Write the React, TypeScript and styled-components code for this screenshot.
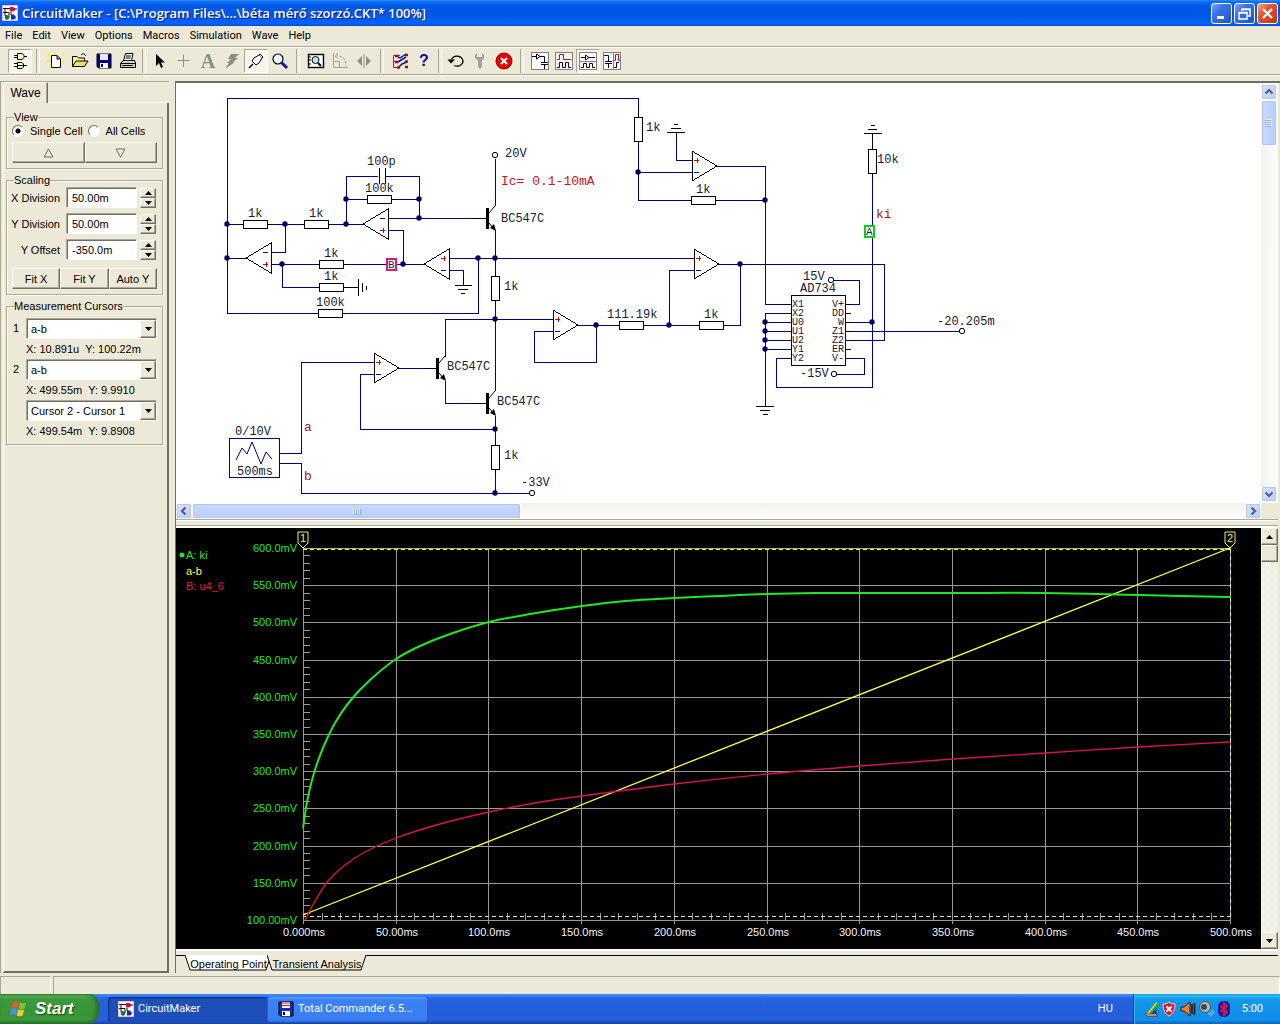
import React, { useState } from "react";
import styled, { createGlobalStyle, css } from "styled-components";

const face = "#ece9d8";
const shade = "#aca899";
const dark = "#716f64";
const navy = "#00007f";
const uiFont = `Roboto, "Noto Sans", sans-serif`;
const sansFont = `"Liberation Sans", Arial, sans-serif`;
const monoFont = `"Liberation Mono", "Courier New", monospace`;

const GlobalStyle = createGlobalStyle`
  * { box-sizing: border-box; }
  body { margin: 0; background: ${face}; font: 11px/14px ${sansFont}; color: #000; }
  button, input, select { font: inherit; color: inherit; margin: 0; padding: 0; border-radius: 0; }
  svg { display: block; }
`;

const raised = css`
  background: ${face};
  border: 1px solid;
  border-color: #fff ${dark} ${dark} #fff;
  box-shadow: inset -1px -1px ${shade};
`;

const sunken = css`
  background: #fff;
  border: 1px solid;
  border-color: ${shade} #fff #fff ${shade};
  box-shadow: inset 1px 1px ${dark};
`;

const Screen = styled.div`
  display: flex;
  flex-direction: column;
  min-height: 100vh;
`;

/* ---------- title bar, menu, toolbar ---------- */

const TitleBar = styled.header`
  display: flex;
  align-items: center;
  gap: 4px;
  height: 26px;
  padding: 0 2px;
  background: linear-gradient(#2a8bff 0, #0c6cf5 2px, #0058e6 6px, #0055e5 14px, #0260f8 21px, #0663fb 24px, #0046c8 26px);
`;

const TitleText = styled.h1`
  flex: 1;
  margin: 0;
  font: 600 13px/18px "Open Sans", "Noto Sans", sans-serif;
  color: #fff;
  text-shadow: 1px 1px #0a1883;
  white-space: nowrap;
  overflow: hidden;
`;

const CaptionButtons = styled.div`
  display: flex;
  gap: 2px;
`;

const CaptionButton = styled.button<{ $close?: boolean }>`
  display: grid;
  place-items: center;
  width: 21px;
  height: 21px;
  border: 1px solid #fff;
  border-radius: 3px;
  background: ${(p) =>
    p.$close
      ? "linear-gradient(135deg, #f0a68c, #e2593a 35%, #d2401b 75%, #b83010)"
      : "linear-gradient(135deg, #7ba5f5, #3d72e4 35%, #2a5fd8 75%, #1b4fc4)"};
`;

const MenuBar = styled.nav`
  display: flex;
  align-items: center;
  gap: 10px;
  height: 20px;
  padding: 0 5px;
`;

const MenuItem = styled.button`
  border: 0;
  background: none;
  font: 11px/14px ${uiFont};
`;

const ToolBar = styled.div`
  display: flex;
  align-items: center;
  height: 30px;
  margin-bottom: 5px;
  padding: 0 8px;
  border-top: 1px solid ${shade};
  border-bottom: 1px solid #fff;
  box-shadow: inset 0 1px #fff, inset 0 -1px ${shade};
`;

const ToolButton = styled.button<{ $pressed?: boolean }>`
  display: grid;
  place-items: center;
  width: 24px;
  height: 24px;
  border: 1px solid;
  border-color: ${(p) => (p.$pressed ? `${shade} #fff #fff ${shade}` : "transparent")};
  background: ${(p) => (p.$pressed ? "#f6f4ec" : "none")};
`;

const ToolSeparator = styled.span<{ $narrow?: boolean }>`
  display: flex;
  justify-content: center;
  width: ${(p) => (p.$narrow ? 8 : 12)}px;
  height: 24px;
  &::before {
    content: "";
    width: 2px;
    border-left: 1px solid ${shade};
    border-right: 1px solid #fff;
  }
`;

/* ---------- side panel ---------- */

const Workspace = styled.main`
  display: flex;
  flex: 1;
  padding-bottom: 3px;
`;

const SidePanel = styled.aside`
  display: flex;
  flex-direction: column;
  flex: none;
  width: 169px;
  margin-right: 6px;
  padding-left: 2px;
  border-top: 1px solid ${shade};
  border-left: 1px solid ${shade};
`;

const SideTabs = styled.div`
  display: flex;
  height: 21px;
  border-left: 1px solid #fff;
`;

const SideTab = styled.button`
  width: 44px;
  height: 21px;
  border: 0;
  border-top: 1px solid #fff;
  border-right: 1px solid ${dark};
  background: ${face};
  box-shadow: inset -1px 0 ${shade};
  font: 12px/16px ${sansFont};
`;

const SideTabRest = styled.span`
  flex: 1;
  border-bottom: 1px solid #fff;
`;

const SideBody = styled.div`
  display: flex;
  flex-direction: column;
  flex: 1;
  gap: 4px;
  padding: 7px 4px 0 2px;
  border: 1px solid;
  border-width: 0 2px 2px 1px;
  border-color: #fff ${dark} ${dark} #fff;
`;

const Group = styled.fieldset`
  min-width: 0;
  margin: 0;
  padding: 0 5px 5px;
  border: 1px solid ${shade};
  box-shadow: 1px 1px #fff, inset 1px 1px #fff;
`;

const GroupTitle = styled.legend`
  margin-left: 2px;
  padding: 0;
  height: 14px;
  background: ${face};
`;

const RadioRow = styled.div`
  display: flex;
  gap: 5px;
  height: 18px;
`;

const RadioLabel = styled.label`
  display: flex;
  align-items: center;
  gap: 6px;
  height: 14px;
  white-space: nowrap;
`;

const Radio = styled.input`
  appearance: none;
  width: 12px;
  height: 12px;
  border: 1px solid;
  border-color: ${dark} #fff #fff ${dark};
  border-radius: 50%;
  background: #fff;
  &:checked {
    background: radial-gradient(circle, #000 2px, #fff 3px);
  }
`;

const ButtonRow = styled.div`
  display: flex;
`;

const PushButton = styled.button`
  ${raised}
  display: grid;
  place-items: center;
  flex: 1;
  height: 21px;
`;

const Fields = styled.div`
  display: flex;
  flex-direction: column;
  gap: 5px;
  padding-bottom: 8px;
`;

const FieldRow = styled.div`
  display: flex;
  align-items: center;
  justify-content: flex-end;
  gap: 6px;
  height: 21px;
  padding-right: 1px;
  white-space: nowrap;
`;

const ValueInput = styled.input`
  ${sunken}
  flex: none;
  width: 71px;
  height: 21px;
  padding-left: 5px;
`;

const Spinner = styled.span`
  display: flex;
  flex-direction: column;
  flex: none;
  width: 16px;
  margin-left: -3px;
`;

const SpinButton = styled.button`
  ${raised}
  display: grid;
  place-items: center;
  height: 10px;
`;

const CursorRows = styled.div`
  display: grid;
  grid-template-columns: 14px 1fr;
  row-gap: 2px;
  padding-top: 5px;
`;

const SelectBox = styled.span`
  ${sunken}
  position: relative;
  display: block;
  height: 21px;
`;

const Select = styled.select`
  appearance: none;
  width: 100%;
  height: 19px;
  padding: 0 18px 0 4px;
  border: 0;
  background: transparent;
`;

const SelectArrow = styled.span`
  ${raised}
  position: absolute;
  top: 1px;
  right: 0;
  display: grid;
  place-items: center;
  width: 16px;
  height: 18px;
  pointer-events: none;
`;

const Reading = styled.p`
  grid-column: 2;
  display: flex;
  gap: 6px;
  margin: 0;
  height: 16px;
  line-height: 16px;
  white-space: nowrap;
`;

const CursorNumber = styled.label`
  padding-top: 3px;
  padding-left: 1px;
`;

/* ---------- document area ---------- */

const Documents = styled.section`
  display: flex;
  flex-direction: column;
  flex: 1;
  min-width: 0;
  padding-right: 2px;
  border-top: 2px solid ${dark};
  border-left: 1px solid ${dark};
`;

const PaneRow = styled.div<{ $grow?: boolean }>`
  display: flex;
  flex: ${(p) => (p.$grow ? "1" : "none")};
`;

const Canvas = styled.div<{ $color: string }>`
  flex: 1;
  min-width: 0;
  overflow: hidden;
  background: ${(p) => p.$color};
`;

const ScrollTrack = styled.div<{ $row?: boolean }>`
  display: flex;
  flex: ${(p) => (p.$row ? "1" : "none")};
  flex-direction: ${(p) => (p.$row ? "row" : "column")};
  width: ${(p) => (p.$row ? "auto" : "17px")};
  height: ${(p) => (p.$row ? "16px" : "auto")};
  padding: ${(p) => (p.$row ? "0" : "1px 1px 1px 0")};
  background: linear-gradient(${(p) => (p.$row ? "180deg" : "90deg")}, #f3f1ec, #fefefb);
`;

const ScrollButton = styled.button`
  display: grid;
  place-items: center;
  flex: none;
  width: 16px;
  height: 16px;
  border: 1px solid #fff;
  border-radius: 2px;
  background: linear-gradient(135deg, #dbe6fe, #b9ccf8);
  box-shadow: inset 0 0 0 1px #b4c8f6;
`;

const ScrollThumb = styled.div<{ $row?: boolean; $size: number }>`
  display: grid;
  place-items: center;
  width: ${(p) => (p.$row ? `${p.$size}px` : "16px")};
  height: ${(p) => (p.$row ? "16px" : `${p.$size}px`)};
  border: 1px solid #fff;
  border-radius: 2px;
  background: linear-gradient(${(p) => (p.$row ? "180deg" : "90deg")}, #c9d8fc, #bbcffb);
  box-shadow: inset 0 0 0 1px #b2c6f4;
`;

const Push = styled.span`
  flex: 1;
`;

const ScrollCorner = styled.span`
  width: 17px;
`;

const Splitter = styled.div`
  height: 9px;
  background: linear-gradient(${shade} 1px, #fff 1px, #fff 2px, ${face} 2px, ${face} 6px, ${shade} 6px, ${shade} 7px, #fff 7px);
`;

const ClassicTrack = styled.div`
  display: flex;
  flex-direction: column;
  width: 17px;
  background: repeating-conic-gradient(#fff 0 25%, ${face} 0 50%) 0 0 / 2px 2px;
`;

const ClassicButton = styled.button`
  ${raised}
  display: grid;
  place-items: center;
  height: 17px;
`;

const SheetTabs = styled.div`
  display: flex;
  height: 24px;
  padding: 6px 0 0 9px;
  background: linear-gradient(#fff 2px, transparent 2px, transparent 6px, #000 6px, #000 7px, transparent 7px);
`;

const SheetTab = styled.button<{ $width: number }>`
  position: relative;
  width: ${(p) => p.$width}px;
  height: 17px;
  margin-right: -5px;
  border: 0;
  background: none;
  white-space: nowrap;
`;

const SheetShape = styled.svg`
  position: absolute;
  inset: 0;
`;

const SheetLabel = styled.span`
  position: relative;
`;

const StatusBar = styled.footer`
  display: grid;
  grid-template-columns: 51px 1fr;
  gap: 2px;
  height: 18px;
`;

const StatusCell = styled.span`
  border-top: 1px solid ${shade};
  border-left: 1px solid ${shade};
  border-right: 1px solid #fff;
`;

/* ---------- task bar ---------- */

const TaskBar = styled.footer`
  display: flex;
  align-items: center;
  height: 30px;
  font: 11px/14px ${uiFont};
  color: #fff;
  background: linear-gradient(#3e80ee 0, #3f8cf3 1px, #2663e0 4px, #245ddb 20px, #2460dd 26px, #1941a5 30px);
`;

const StartButton = styled.button`
  display: flex;
  align-items: center;
  gap: 6px;
  width: 99px;
  height: 30px;
  margin-right: 9px;
  padding-left: 9px;
  border: 0;
  border-radius: 0 10px 12px 0;
  font: italic 700 17px/22px ${sansFont};
  text-shadow: 1px 1px 1px #17430f;
  background: linear-gradient(#3c873c 0, #5bb35b 2px, #3d993c 5px, #389438 22px, #3a9a3a 26px, #277027 30px);
  box-shadow: inset -3px 0 4px #2a6b2a;
`;

const TaskButton = styled.button<{ $active?: boolean }>`
  display: flex;
  align-items: center;
  gap: 4px;
  width: 159px;
  height: 25px;
  margin: 0 1px 0 0;
  padding-left: 10px;
  border: 0;
  border-radius: 3px;
  white-space: nowrap;
  background: ${(p) =>
    p.$active ? "#1d4fb6" : "linear-gradient(#5a9bff 0, #3c81f3 3px, #3a7ff2 22px, #2f6fdd 25px)"};
  box-shadow: ${(p) => (p.$active ? "inset 1px 1px 2px #0d2f80" : "none")};
`;

const Language = styled.span`
  margin-left: auto;
  padding-right: 20px;
`;

const Tray = styled.div`
  display: flex;
  align-items: center;
  gap: 10px;
  height: 30px;
  padding: 0 17px 0 10px;
  border-left: 1px solid #0b3a9a;
  background: linear-gradient(#1898e6 0, #2cb8f8 2px, #139ae8 5px, #0f8fe8 22px, #1290ea 26px, #0a63b8 30px);
  box-shadow: inset 1px 0 #2cc0f8;
`;

const Clock = styled.time``;

/* ---------- small drawings ---------- */

const Triangle = ({ up, open }: { up?: boolean; open?: boolean }) =>
  open ? (
    <svg width="11" height="10" viewBox="0 0 11 10" fill="none" stroke="#716f64">
      <path d={up ? "M1 9H10L5.500 1Z" : "M1 1H10L5.500 9Z"} />
    </svg>
  ) : (
    <svg width="7" height="4" viewBox="0 0 7 4">
      <path d={up ? "M0 4H7L3.500 0Z" : "M0 0H7L3.500 4Z"} />
    </svg>
  );

const Chevron = ({ turn }: { turn: number }) => (
  <svg width="10" height="10" viewBox="0 0 10 10" fill="none" stroke="#4d6185" strokeWidth="2.200">
    <path d="M1.500 6.500 5 3l3.500 3.500" transform={`rotate(${turn} 5 5)`} />
  </svg>
);

const Grip = ({ row }: { row?: boolean }) => (
  <svg width="8" height="8" viewBox="0 0 8 8">
    <g transform={row ? undefined : "rotate(90 4 4)"} shapeRendering="crispEdges">
      <path d="M0 1V7M2 1V7M4 1V7M6 1V7" stroke="#eef4fe" />
      <path d="M1 2V8M3 2V8M5 2V8M7 2V8" stroke="#8cb0f8" />
    </g>
  </svg>
);

const AppIcon = ({ size = 16 }: { size?: number }) => (
  <svg width={size} height={size} viewBox="0 0 16 16">
    <rect width="16" height="16" fill="#fff" stroke="#f4a0c8" strokeWidth="1.500" />
    <path d="M1 3.500H8M3 3V11M1 7.500H7V12M3 11H6" stroke="#111" fill="none" />
    <path d="M8 2h2.500a2.500 2.300 0 0 1 0 4.600H8Z" fill="#d81030" />
    <path d="M12 4h3M9 7v3h3" stroke="#111" fill="none" />
    <circle cx="5" cy="12.500" r="2.200" fill="#0a7a3a" />
    <path d="M9 10h2.500a2.200 2.200 0 0 1 0 4.500H9Z" fill="#1430a8" />
  </svg>
);

const Floppy = ({ size = 16, red }: { size?: number; red?: boolean }) => (
  <svg width={size} height={size} viewBox="0 0 16 16">
    <path d="M1 1H15V15H2.500L1 13.500Z" fill={red ? "#1a2fae" : "#000080"} stroke="#000" />
    <rect x="4" y="1" width="8" height="6" fill={red ? "#f4f4f4" : "#e8e8f4"} />
    {red && <path d="M4 2H12M4 4.500H12" stroke="#d02020" />}
    <rect x="4" y="10" width="8" height="5" fill="#fff" />
    <rect x="5" y="11" width="2" height="3" fill="#000060" />
  </svg>
);

const icons: Record<string, React.ReactNode> = {
  parts: (
    <g stroke="#000" fill="#ffffb0">
      <path d="M6.500 1.500H10c4 0 4 6 0 6H6.500Z" />
      <path d="M3 3.500H6M3 5.500H6M13 4.500h3M3 11.500H6M3 14.500H6M13 13.500h3" fill="none" />
      <path d="M6.500 10.500H11l1.500 1.500V15l-1.500 1.500H6.500Z" />
      <path d="M7 13.500H12" />
    </g>
  ),
  new: (
    <g>
      <path d="M1 2 4 5M0 9h3M15 3l2-1M15 10h2M2 16l2-1M8 0v2" stroke="#fff200" strokeWidth="2" />
      <path d="M4.500 3.500H10L13.500 7V15.500H4.500ZM10 3.500V7H13.500" fill="#fff" stroke="#000" />
    </g>
  ),
  open: (
    <g stroke="#000" fill="#ffff90">
      <path d="M1.500 14.500V4.500H6L7.500 6H13.500V9" />
      <path d="M1.500 14.500 5 9H17L13.500 14.500Z" fill="#e8e070" />
      <path d="M10 3c2-2 4-1 5 1" fill="none" />
    </g>
  ),
  print: (
    <g stroke="#000" fill="#fff">
      <path d="M4.500 9 6.500 1.500H14L12.500 9Z" />
      <path d="M7 4H12M6.500 6H11.500" />
      <path d="M1.500 11.500 4 8.500H15.500L16.500 11V15.500H1.500Z" fill="#d8d4c0" />
      <path d="M1.500 11.500H16M3 13.500H14" />
    </g>
  ),
  arrow: <path d="M5 2V14L8 11 10 16 12 15 10 10.500H14Z" />,
  plus: <path d="M8.500 3V15M2.500 8.500H14.500" stroke="#8f8d84" />,
  bolt: <path d="M8 2H16L12 6H15L10 10H12L2 17 6 11H4L8 7H5Z" fill="#8f8d84" />,
  probe: (
    <g stroke="#000" fill="#fff">
      <path d="M2 16 6 12" strokeWidth="1.500" />
      <path d="M5 9 9 13 12 11 15 6 12 3 7 6Z" />
      <path d="M12 3 13 2 16 5 15 6" />
    </g>
  ),
  zoom: (
    <g fill="none">
      <circle cx="7" cy="7" r="5" fill="#f0ffff" stroke="#000" strokeWidth="1.200" />
      <path d="M10.500 10.500 16 16" stroke="#1a1a90" strokeWidth="3" />
    </g>
  ),
  fit: (
    <g fill="none" stroke="#000">
      <rect x="1.500" y="2.500" width="15" height="13" fill="#fff" strokeWidth="1.400" />
      <circle cx="8.500" cy="8" r="3.500" fill="#bfe6ea" />
      <path d="M11 11 14 14" strokeWidth="2" />
      <path d="M2 5H4M2 8H4M2 12H4" />
    </g>
  ),
  rotate: (
    <g fill="none" stroke="#a5a398">
      <path d="M2.500 1V15.500H17M2.500 9.500H8.500V15" />
      <path d="M7 1 4 4 7 7M4 4h3c5 0 8 4 8 10" strokeDasharray="3 1" />
    </g>
  ),
  mirror: (
    <g>
      <path d="M9 2V16" stroke="#8f8d84" />
      <path d="M7 4V14L2 9ZM11 4V14L16 9Z" fill="#8f8d84" />
    </g>
  ),
  nodes: (
    <g fill="none">
      <path d="M2.500 3.500H9M2.500 3.500V15.500H7M2.500 9.500H7" stroke="#d01020" />
      <path d="M7 5 9 6 15 2M7 10 15 5M8 15 11 12 16 10" stroke="#0a18a0" strokeWidth="1.500" />
      <path d="M4 4h3M4 10h3M6 15.500h3M14 3h3M14 9.500h3M14 15h3" stroke="#a01010" strokeWidth="2.500" />
    </g>
  ),
  undo: (
    <g>
      <path d="M4 9a6 5 0 1 1 3 4.500" fill="none" stroke="#000" strokeWidth="1.300" />
      <path d="M0.500 7.500H8L4 11.500Z" />
    </g>
  ),
  wrench: (
    <path d="M6 1V5H11V1C14 3 14 7 11 8V15L9 17 7 15V8C3 7 3 3 6 1Z" fill="#a5a398" />
  ),
  stop: (
    <g>
      <circle cx="9" cy="9" r="8" fill="#e00808" stroke="#900" />
      <path d="M6 6 12 12M12 6 6 12" stroke="#fff" strokeWidth="2" />
    </g>
  ),
  schematic: (
    <g fill="none" stroke="#000050">
      <rect x="0.500" y="0.500" width="17" height="17" fill="#fff" stroke="#808080" />
      <path d="M1 4.500H5M9 4.500H13.500V10M5.500 2V7L9 4.500ZM10 10.500H17M10 12.500H17M13.500 13V17" />
    </g>
  ),
  waves: (
    <g fill="none">
      <rect x="0.500" y="0.500" width="17" height="17" fill="#f6f4ec" stroke="#808080" />
      <path d="M2 7.500H4.500V2.500H8.500V7.500H16" stroke="#c01010" />
      <path d="M2 15.500H4.500V10.500H7.500V15.500H10.500V10.500H13.500V15.500H16" stroke="#000050" />
    </g>
  ),
  stacked: (
    <g fill="none" stroke="#000050">
      <rect x="0.500" y="0.500" width="17" height="17" fill="#fff" stroke="#808080" />
      <path d="M2 5.500H6M10 5.500H16M6.500 3V8L10 5.500Z" />
      <path d="M1 9.500H17" stroke="#808080" />
      <path d="M2 15.500H4.500V11.500H7.500V15.500H10.500V11.500H13.500V15.500H16" />
    </g>
  ),
  split: (
    <g fill="none" stroke="#000050">
      <rect x="0.500" y="0.500" width="17" height="17" fill="#fff" stroke="#808080" />
      <path d="M1 3.500H5.500V9M2 9.500H9M2 11.500H9M5.500 12V16" />
      <path d="M10.500 1V17" stroke="#808080" />
      <path d="M11 8.500H12.500V2.500H15.500V8.500H17" stroke="#c01010" />
      <path d="M11 15.500H13.500V10.500H16" />
    </g>
  ),
};

const Glyph = styled.span<{ $serif?: boolean }>`
  font: ${(p) => (p.$serif ? `700 20px/22px "Liberation Serif", serif` : `700 16px/20px ${sansFont}`)};
  color: ${(p) => (p.$serif ? "#8f8d84" : "#0a0a9c")};
`;

const Icon = ({ name }: { name: string }) => {
  if (name === "text") return <Glyph $serif>A</Glyph>;
  if (name === "help") return <Glyph>?</Glyph>;
  if (name === "save") return <Floppy />;
  return (
    <svg width="18" height="18" viewBox="0 0 18 18">
      {icons[name]}
    </svg>
  );
};

/* ---------- schematic ---------- */

const Label = styled.text<{ $size?: number; $color?: string }>`
  font: ${(p) => p.$size ?? 12}px ${monoFont};
  fill: ${(p) => p.$color ?? "#202030"};
`;

const resistors: [number, number, boolean][] = [
  [255, 224, false], [316, 224, false], [379, 199, false], [331, 264, false], [331, 287, false],
  [330, 313, false], [631, 325, false], [711, 325, false], [703, 200, false],
  [495, 288, true], [495, 457, true], [638, 129, true], [872, 161, true],
];

const nodes: [number, number][] = [
  [227, 224], [227, 258], [285, 224], [346, 224], [346, 199], [419, 199], [419, 218], [403, 264],
  [282, 264], [478, 258], [495, 258], [495, 319], [596, 325], [669, 325], [740, 264], [638, 172],
  [765, 200], [765, 322], [765, 331], [765, 340], [765, 349], [872, 322], [495, 429], [495, 493],
];

// x, y of the base centre, direction of the tip, and whether "+" is the upper input
const opamps: [number, number, 1 | -1, boolean][] = [
  [271, 258, -1, false], [388, 224, -1, false], [449, 264, -1, true],
  [692, 166, 1, true], [694, 264, 1, true], [553, 325, 1, true], [374, 368, 1, true],
];

const transistors: [number, number][] = [[487, 218], [437, 368], [487, 403]];

const terminals: [number, number][] = [[495, 155], [831, 280], [834, 374], [962, 331], [532, 493]];

const wires = [
  "M227 313V98H638V200H765", "M227 224H363M285 224V252H271", "M346 224V176H378M386 176H419V218",
  "M346 199H419M388 218H470", "M388 230H403V264M271 264H424M282 264V287H345", "M227 258H236",
  "M227 313H478V258M449 258H694", "M449 270H463V278M495 159V206M495 230V391",
  "M445 357V319H553M445 381V403H470", "M553 331H534V362H596V325M578 325H740V264M669 325V270H694",
  "M718 264H884V340H846M717 166H765V304H791", "M692 160H676V138M692 172H638",
  "M791 313H765V402M765 322H791M765 331H791M765 340H791M765 349H791", "M791 358H776V387H872V139M846 322H872",
  "M846 304H859V280H834M846 358H864V374H837M846 331H959", "M374 362H301V453H279M374 374H360V429H495",
  "M399 368H430M495 416V493M279 463H301V493H529",
];

const blackLines = [
  "M379 168V184M385 168V184", "M345 287H358M358 279V296M362 283V292M366 286V290",
  "M463 278V285M455 285H472M458 289H468M461 293H465", "M676 138V132M667 132H685M671 128H681M674 124H678",
  "M872 139V133M864 133H882M868 129H877M871 125H875", "M765 400V406M756 406H774M760 410H770M763 414H768",
  "M470 218H486M470 403H486M425 368H436", "M785 304H791M785 313H791M785 358H791M236 258H246",
  "M846 304H851M846 313H851M846 322H851M846 331H851M846 340H851M846 349H851M846 358H851",
];

const labels: [string, number, number][] = [
  ["100p", 367, 165], ["100k", 365, 192], ["1k", 248, 217], ["1k", 309, 217], ["1k", 324, 257],
  ["1k", 324, 280], ["100k", 316, 306], ["20V", 505, 157], ["BC547C", 501, 222], ["1k", 504, 290],
  ["BC547C", 447, 370], ["BC547C", 497, 405], ["1k", 504, 459], ["-33V", 521, 486], ["0/10V", 235, 435],
  ["500ms", 237, 475], ["1k", 646, 131], ["1k", 696, 193], ["10k", 877, 163], ["111.19k", 607, 318],
  ["1k", 704, 318], ["15V", 803, 280], ["AD734", 800, 292], ["-15V", 800, 377], ["-20.205m", 937, 325],
];

const leftPins = ["X1", "X2", "U0", "U1", "U2", "Y1", "Y2"];
const rightPins = ["V+", "DD", "W", "Z1", "Z2", "ER", "V-"];

const Schematic = () => (
  <svg width="1085" height="420" viewBox="176 83 1085 420" role="img" aria-label="Circuit schematic">
    <g fill="none" shapeRendering="crispEdges">
      <path d={wires.join("")} stroke={navy} />
      <path d={blackLines.join("")} stroke="#000" />
      <path d="M381 176H384" stroke="#fff" />
      <rect x="791" y="295" width="54" height="70" fill="#fff" stroke="#000" />
      <rect x="229" y="438" width="50" height="39" fill="#fff" stroke={navy} />
      {resistors.map(([x, y, upright]) =>
        upright ? (
          <g key={`${x}-${y}`}>
            <path d={`M${x} ${y - 16}V${y + 16}`} stroke="#000" />
            <rect x={x - 4} y={y - 12} width="8" height="24" fill="#fff" stroke="#000" />
          </g>
        ) : (
          <g key={`${x}-${y}`}>
            <path d={`M${x - 16} ${y}H${x + 16}`} stroke="#000" />
            <rect x={x - 12} y={y - 4} width="24" height="8" fill="#fff" stroke="#000" />
          </g>
        ),
      )}
    </g>
    {opamps.map(([x, y, dir, plusUp]) => {
      const s = x + dir * 5;
      const plus = plusUp ? y - 6 : y + 6;
      const minus = plusUp ? y + 6 : y - 6;
      return (
        <g key={`${x}-${y}`} fill="none" shapeRendering="crispEdges">
          <path d={`M${x} ${y - 15}V${y + 15}L${x + dir * 25} ${y}Z`} fill="#fff" stroke="#000" />
          <path d={`M${s - 3} ${plus}H${s + 2}M${s} ${plus - 2}V${plus + 3}`} stroke="#d00000" />
          <path d={`M${s - 3} ${minus}H${s + 2}`} stroke="#0000c0" />
        </g>
      );
    })}
    {transistors.map(([x, y]) => (
      <g key={`${x}-${y}`}>
        <rect x={x - 1} y={y - 10} width="3" height="21" />
        <path d={`M${x + 2} ${y - 5}L${x + 8} ${y - 12}M${x + 2} ${y + 5}L${x + 8} ${y + 12}`} stroke="#000" />
        <path d={`M${x + 9} ${y + 13}L${x + 3} ${y + 10}L${x + 7} ${y + 6}Z`} />
      </g>
    ))}
    {nodes.map(([x, y]) => (
      <circle key={`${x}-${y}`} cx={x} cy={y} r="2.700" fill="#000060" />
    ))}
    {terminals.map(([x, y]) => (
      <circle key={`${x}-${y}`} cx={x} cy={y} r="2.700" fill="#fff" stroke="#000" />
    ))}
    <path d="M236 460 242 448 247 454 252 442 261 464 266 452 272 459" fill="none" stroke={navy} />
    <rect x="387" y="259" width="9" height="11" fill="#fff" stroke="#d8187c" strokeWidth="2" />
    <Label x="388" y="268" $size={11}>B</Label>
    <rect x="865" y="226" width="9" height="11" fill="#fff" stroke="#00d020" strokeWidth="2" />
    <Label x="866" y="235" $size={11}>A</Label>
    {labels.map(([t, x, y]) => (
      <Label key={`${x}-${y}`} x={x} y={y}>{t}</Label>
    ))}
    {leftPins.map((t, i) => (
      <Label key={t} x="792" y={307 + i * 9} $size={10}>{t}</Label>
    ))}
    {rightPins.map((t, i) => (
      <Label key={t} x="844" y={307 + i * 9} $size={10} textAnchor="end">{t}</Label>
    ))}
    <Label x="501" y="185" $size={13} $color="#d01020">Ic= 0.1-10mA</Label>
    <Label x="876" y="218" $size={13} $color="#a02020">ki</Label>
    <Label x="304" y="431" $size={13} $color="#a02020">a</Label>
    <Label x="304" y="480" $size={13} $color="#a02020">b</Label>
  </svg>
);

/* ---------- oscillogram ---------- */

const PlotText = styled.text<{ $color: string }>`
  font: 11px ${sansFont};
  fill: ${(p) => p.$color};
`;

type Point = [number, number];

const smooth = (pts: Point[]) => {
  let d = `M${pts[0][0]} ${pts[0][1]}`;
  for (let i = 0; i < pts.length - 1; i++) {
    const a = pts[Math.max(i - 1, 0)];
    const b = pts[i];
    const c = pts[i + 1];
    const e = pts[Math.min(i + 2, pts.length - 1)];
    const w = (c[0] - b[0]) / 3;
    const m1 = (c[1] - a[1]) / (c[0] - a[0]);
    const m2 = (e[1] - b[1]) / (e[0] - b[0]);
    d += `C${b[0] + w} ${b[1] + m1 * w} ${c[0] - w} ${c[1] - m2 * w} ${c[0]} ${c[1]}`;
  }
  return d;
};

const greenCurve: Point[] = [
  [303, 828], [307, 802], [314, 773], [323, 748], [335, 723], [350, 701], [370, 680], [396, 659],
  [420, 646], [450, 634], [489, 622], [530, 614], [582, 606], [625, 601], [674, 598], [720, 596],
  [767, 594], [815, 593], [860, 593], [953, 593], [1045, 593], [1138, 595], [1230, 597],
];
const redCurve: Point[] = [
  [305, 920], [310, 910], [318, 896], [328, 881], [345, 865], [365, 852], [396, 838], [440, 824],
  [489, 812], [535, 803], [582, 796], [674, 784], [767, 774], [860, 766], [953, 759], [1045, 753],
  [1138, 747], [1230, 742],
];

const yLabels = ["600.0mV", "550.0mV", "500.0mV", "450.0mV", "400.0mV", "350.0mV", "300.0mV", "250.0mV", "200.0mV", "150.0mV", "100.00mV"];
const xLabels = ["0.000ms", "50.00ms", "100.0ms", "150.0ms", "200.0ms", "250.0ms", "300.0ms", "350.0ms", "400.0ms", "450.0ms", "500.0ms"];
const gridX = (i: number) => Math.round(303 + i * 92.7);
const gridY = (i: number) => Math.round(548 + i * 37.2);
const range = (n: number) => Array.from({ length: n }, (_, i) => i);

const Oscillogram = () => (
  <svg width="100%" height="100%" viewBox="176 528 1085 421" role="img" aria-label="Transient analysis waveforms">
    <g stroke="#9a9a9a" shapeRendering="crispEdges">
      {range(11).map((i) => (
        <path key={i} d={`M${gridX(i)} 548V924M303 ${gridY(i)}H1230`} />
      ))}
      {range(51).map((i) => (
        <path key={i} d={`M303 ${Math.round(548 + i * 7.44)}h7M${Math.round(303 + i * 18.54)} 913v7`} />
      ))}
    </g>
    <g stroke="#f0f060" fill="none" shapeRendering="crispEdges">
      <path d="M303 548H1230" stroke="#b8b850" />
      <path d="M303 549H1230M303 916H1230M1230 549V920" strokeDasharray="4 3" />
    </g>
    <path d="M303 915 1230 548" stroke="#ffff50" strokeWidth="1.300" />
    <path d={smooth(redCurve)} fill="none" stroke="#d81450" strokeWidth="1.300" />
    <path d={smooth(greenCurve)} fill="none" stroke="#20e820" strokeWidth="2" />
    {[303, 1230].map((x, i) => (
      <g key={x}>
        <path d={`M${x - 5} 532h10v11l-5 5-5-5Z`} fill="#000" stroke="#f0f060" />
        <PlotText x={x} y="542" $color="#f0f060" textAnchor="middle">{i + 1}</PlotText>
      </g>
    ))}
    {yLabels.map((t, i) => (
      <PlotText key={t} x="297" y={gridY(i) + 4} $color="#20e820" textAnchor="end">{t}</PlotText>
    ))}
    {xLabels.map((t, i) => (
      <PlotText key={t} x={gridX(i) + 1} y="936" $color="#f4f4f4" textAnchor="middle">{t}</PlotText>
    ))}
    <circle cx="182" cy="555" r="2.500" fill="#20e820" />
    <PlotText x="186" y="559" $color="#20e820">A: ki</PlotText>
    <PlotText x="186" y="575" $color="#ffff50">a-b</PlotText>
    <PlotText x="186" y="590" $color="#e8145c">B: u4_6</PlotText>
  </svg>
);

/* ---------- composed parts ---------- */

type Tool = [icon: string, title: string, pressed?: boolean];
const toolGroups: { tools: Tool[]; narrow?: boolean }[] = [
  { tools: [["parts", "Parts browser", true]] },
  { tools: [["new", "New"], ["open", "Open"], ["save", "Save"], ["print", "Print"]], narrow: true },
  { tools: [["arrow", "Arrow"], ["plus", "Wire"], ["text", "Text"], ["bolt", "Delete"], ["probe", "Probe", true], ["zoom", "Zoom"]] },
  { tools: [["fit", "Fit to window"], ["rotate", "Rotate 90"], ["mirror", "Mirror"]] },
  { tools: [["nodes", "Digital mode"], ["help", "Help"]], narrow: true },
  { tools: [["undo", "Reset"], ["wrench", "Setup"], ["stop", "Stop"]] },
  { tools: [["schematic", "Schematic"], ["waves", "Waves"], ["stacked", "Split horizontally", true], ["split", "Split vertically"]] },
];

const Field = ({ id, label, value }: { id: string; label: string; value: string }) => (
  <FieldRow>
    <label htmlFor={id}>{label}</label>
    <ValueInput id={id} defaultValue={value} />
    <Spinner>
      <SpinButton aria-label={`Increase ${label}`}><Triangle up /></SpinButton>
      <SpinButton aria-label={`Decrease ${label}`}><Triangle /></SpinButton>
    </Spinner>
  </FieldRow>
);

const Picker = ({ id, value, label }: { id: string; value: string; label?: string }) => (
  <SelectBox>
    <Select id={id} aria-label={label} defaultValue={value}>
      <option>{value}</option>
    </Select>
    <SelectArrow><Triangle /></SelectArrow>
  </SelectBox>
);

const WavePanel = () => {
  const [view, setView] = useState("single");
  return (
    <SidePanel>
      <SideTabs>
        <SideTab>Wave</SideTab>
        <SideTabRest />
      </SideTabs>
      <SideBody>
        <Group>
          <GroupTitle>View</GroupTitle>
          <RadioRow>
            <RadioLabel>
              <Radio type="radio" name="view" checked={view === "single"} onChange={() => setView("single")} />
              Single Cell
            </RadioLabel>
            <RadioLabel>
              <Radio type="radio" name="view" checked={view === "all"} onChange={() => setView("all")} />
              All Cells
            </RadioLabel>
          </RadioRow>
          <ButtonRow>
            <PushButton aria-label="Previous cell"><Triangle up open /></PushButton>
            <PushButton aria-label="Next cell"><Triangle open /></PushButton>
          </ButtonRow>
        </Group>
        <Group>
          <GroupTitle>Scaling</GroupTitle>
          <Fields>
            <Field id="xdiv" label="X Division" value="50.00m" />
            <Field id="ydiv" label="Y Division" value="50.00m" />
            <Field id="yoff" label="Y Offset" value="-350.0m" />
          </Fields>
          <ButtonRow>
            <PushButton>Fit X</PushButton>
            <PushButton>Fit Y</PushButton>
            <PushButton>Auto Y</PushButton>
          </ButtonRow>
        </Group>
        <Group>
          <GroupTitle>Measurement Cursors</GroupTitle>
          <CursorRows>
            <CursorNumber htmlFor="cursor1">1</CursorNumber>
            <Picker id="cursor1" value="a-b" />
            <Reading><span>X: 10.891u</span><span>Y: 100.22m</span></Reading>
            <CursorNumber htmlFor="cursor2">2</CursorNumber>
            <Picker id="cursor2" value="a-b" />
            <Reading><span>X: 499.55m</span><span>Y: 9.9910</span></Reading>
            <span />
            <Picker id="difference" value="Cursor 2 - Cursor 1" label="Difference" />
            <Reading><span>X: 499.54m</span><span>Y: 9.8908</span></Reading>
          </CursorRows>
        </Group>
      </SideBody>
    </SidePanel>
  );
};

const Sheet = ({ label, width, active }: { label: string; width: number; active?: boolean }) => (
  <SheetTab $width={width}>
    <SheetShape width={width} height="17" viewBox={`0 0 ${width} 17`}>
      <path d={`M0 0 5 15H${width - 6}L${width - 1} 0`} fill={active ? "#fff" : face} stroke="#000" />
    </SheetShape>
    <SheetLabel>{label}</SheetLabel>
  </SheetTab>
);

const TrayIcons = () => (
  <svg width="88" height="18" viewBox="0 0 88 18">
    <path d="M2 14 12 3 13 15Z" fill="#2040c0" />
    <path d="M3 15 13 3" stroke="#ffe020" strokeWidth="2" />
    <path d="M5 15 14 4" stroke="#20b030" strokeWidth="2" />
    <path d="M1 14H12L14 16H3Z" fill="#f8e8d0" stroke="#803010" />
    <path d="M25 2C27 4 29 4 31 4 31 10 29 14 25 16 21 14 19 10 19 4 21 4 23 4 25 2Z" fill="#d81830" stroke="#f4d0d0" />
    <path d="M22.500 6.500 27.500 11.500M27.500 6.500 22.500 11.500" stroke="#fff" strokeWidth="2" />
    <path d="M37 7H40L46 2V16L40 11H37Z" fill="#f08030" stroke="#401808" />
    <path d="M48 4V14M50.500 3V15" stroke="#201010" strokeWidth="1.500" />
    <circle cx="61" cy="7" r="5.500" fill="#b8b8b8" stroke="#505860" />
    <circle cx="60" cy="7" r="3" fill="#404850" />
    <path d="M64 14c2 0 4-2 5-4M66 16c2-1 3-2 4-4" stroke="#c0d8f0" fill="none" />
    <rect x="74" y="1" width="12" height="16" rx="5" fill="#1020b0" />
    <path d="M76.500 6 83 12 80 15V3L83 6 76.500 12" fill="none" stroke="#f01030" strokeWidth="1.800" />
  </svg>
);

const WindowsFlag = () => (
  <svg width="20" height="18" viewBox="0 0 20 18">
    <path d="M4 2c2-1 4-1 6 0L8.500 8c-2-1-4-1-6 0Z" fill="#f0582c" />
    <path d="M11 2.500c2 1 4 1 6 0L15.500 8.500c-2 1-4 1-6 0Z" fill="#7cc242" />
    <path d="M2.200 9c2-1 4-1 6 0L6.800 15c-2-1-4-1-6 0Z" fill="#4a90e8" />
    <path d="M9.200 9.500c2 1 4 1 6 0L13.700 15.500c-2 1-4 1-6 0Z" fill="#fcc82c" />
  </svg>
);

export default function App() {
  return (
    <Screen>
      <GlobalStyle />
      <TitleBar>
        <AppIcon />
        <TitleText>CircuitMaker - [C:\Program Files\...\béta mérő szorzó.CKT* 100%]</TitleText>
        <CaptionButtons>
          <CaptionButton aria-label="Minimize">
            <svg width="13" height="13"><rect x="2" y="9" width="7" height="3" fill="#fff" /></svg>
          </CaptionButton>
          <CaptionButton aria-label="Restore">
            <svg width="13" height="13" fill="none" stroke="#fff">
              <path d="M4 4V2H12V9H10M4 2.500H12" strokeWidth="1.500" />
              <path d="M1 5.500H9V12H1ZM1 6H9" strokeWidth="1.500" />
            </svg>
          </CaptionButton>
          <CaptionButton aria-label="Close" $close>
            <svg width="13" height="13"><path d="M2 2 11 11M11 2 2 11" stroke="#fff" strokeWidth="2.200" /></svg>
          </CaptionButton>
        </CaptionButtons>
      </TitleBar>
      <MenuBar>
        {["File", "Edit", "View", "Options", "Macros", "Simulation", "Wave", "Help"].map((m) => (
          <MenuItem key={m}>{m}</MenuItem>
        ))}
      </MenuBar>
      <ToolBar>
        {toolGroups.map((group, i) => (
          <React.Fragment key={i}>
            {i > 0 && <ToolSeparator $narrow={toolGroups[i - 1].narrow} />}
            {group.tools.map(([icon, title, pressed]) => (
              <ToolButton key={icon} aria-label={title} $pressed={pressed}>
                <Icon name={icon} />
              </ToolButton>
            ))}
          </React.Fragment>
        ))}
      </ToolBar>
      <Workspace>
        <WavePanel />
        <Documents>
          <PaneRow>
            <Canvas $color="#fff"><Schematic /></Canvas>
            <ScrollTrack>
              <ScrollButton aria-label="Scroll up"><Chevron turn={0} /></ScrollButton>
              <ScrollThumb $size={46}><Grip /></ScrollThumb>
              <Push />
              <ScrollButton aria-label="Scroll down"><Chevron turn={180} /></ScrollButton>
            </ScrollTrack>
          </PaneRow>
          <PaneRow>
            <ScrollTrack $row>
              <ScrollButton aria-label="Scroll left"><Chevron turn={270} /></ScrollButton>
              <ScrollThumb $row $size={329}><Grip row /></ScrollThumb>
              <Push />
              <ScrollButton aria-label="Scroll right"><Chevron turn={90} /></ScrollButton>
            </ScrollTrack>
            <ScrollCorner />
          </PaneRow>
          <Splitter />
          <PaneRow $grow>
            <Canvas $color="#000"><Oscillogram /></Canvas>
            <ClassicTrack>
              <ClassicButton aria-label="Wave up"><Triangle up /></ClassicButton>
              <ClassicButton aria-label="Wave position" />
              <Push />
              <ClassicButton aria-label="Wave down"><Triangle /></ClassicButton>
            </ClassicTrack>
          </PaneRow>
          <SheetTabs>
            <Sheet label="Operating Point" width={87} active />
            <Sheet label="Transient Analysis" width={100} />
          </SheetTabs>
        </Documents>
      </Workspace>
      <StatusBar>
        <StatusCell />
        <StatusCell />
      </StatusBar>
      <TaskBar>
        <StartButton><WindowsFlag />Start</StartButton>
        <TaskButton $active><AppIcon />CircuitMaker</TaskButton>
        <TaskButton><Floppy red />Total Commander 6.5...</TaskButton>
        <Language>HU</Language>
        <Tray>
          <TrayIcons />
          <Clock>5:00</Clock>
        </Tray>
      </TaskBar>
    </Screen>
  );
}
